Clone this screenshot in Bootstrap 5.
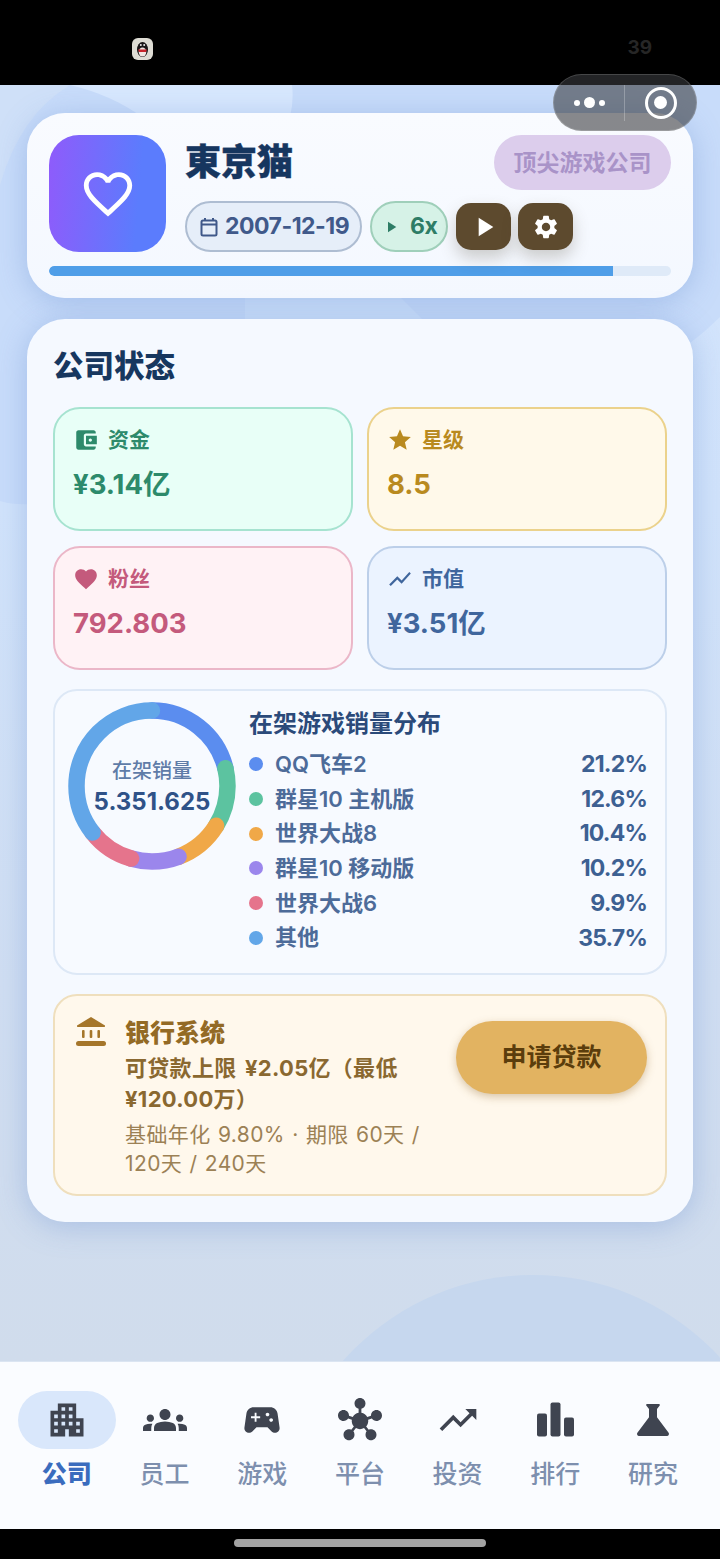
<!DOCTYPE html>
<html lang="zh-CN">
<head>
  <meta charset="UTF-8">
  <title>東京猫 | 公司状态</title>
  <meta name="viewport" content="width=device-width, initial-scale=1">
  <link href="https://cdn.jsdelivr.net/npm/bootstrap@5.3.0/dist/css/bootstrap.min.css" rel="stylesheet" />
  <style>
    body {
      margin: 0;
      background: #000;
      font-family: Inter, "Noto Sans CJK SC", sans-serif;
    }
    svg { display: block; fill: currentColor; flex-shrink: 0; }
    .phone { width: 720px; height: 1559px; position: relative; overflow: hidden; }

    /* status bar */
    .status-bar { height: 85px; background: #000; padding: 38px 68px 0 132px; }
    .status-num { color: #262626; font-size: 19px; font-weight: 700; line-height: 20px; }
    .capsule {
      position: absolute; left: 553px; top: 74px; width: 144px; height: 57px;
      border-radius: 29px; background: rgba(58, 60, 64, .6); border: 1px solid rgba(255,255,255,.16);
      color: #fff; z-index: 5;
    }
    .capsule-side { width: 70px; }
    .capsule-line { width: 1px; height: 36px; background: rgba(255,255,255,.25); }
    .cap-dot { width: 6px; height: 6px; border-radius: 50%; background: #fff; }
    .cap-dot.big { width: 11px; height: 11px; }
    .cap-ring { width: 32px; height: 32px; border-radius: 50%; border: 3px solid #fff; }
    .cap-ring span { width: 13px; height: 13px; border-radius: 50%; background: #fff; }

    /* page */
    .page-area {
      height: 1276px; position: relative; overflow: hidden; padding: 28px 27px 0;
      background: linear-gradient(180deg, #d4e5fd 0, #d1e3fb 420px, #d0def2 900px, #d0dcec 1276px);
    }
    .bg-shapes { position: absolute; left: 0; top: 0; }
    .bg-arc {
      position: absolute; left: 280px; top: 1190px; width: 506px; height: 506px;
      border-radius: 50%; background: #c6d7ee;
    }
    .glass {
      position: relative; background: #f5f9ff; border-radius: 38px;
      box-shadow: 0 4px 30px rgba(96, 136, 205, .36);
    }
    .head-card { height: 185px; padding: 22px; margin-bottom: 21px; background: linear-gradient(180deg,#f9fbff,#f4f8ff); }
    .logo-box {
      width: 117px; height: 117px; border-radius: 30px; color: #fff;
      background: linear-gradient(95deg, #8f5bfb, #5b7cfd 75%);
    }
    .head-main { margin-left: 20px; }
    .head-title { font-size: 36px; font-weight: 800; color: #16365f; line-height: 55px; height: 55px; margin-left: -1px; -webkit-text-stroke: .4px #16365f; }
    .level-tag {
      width: 177px; height: 55px; border-radius: 28px; background: #dccdec; padding-top: 2px;
      color: #a993c8; font-size: 23px; font-weight: 700;
    }
    .chip-row { margin-top: 11px; margin-left: -1px; gap: 8px; }
    .chip {
      height: 51px; border-radius: 26px; border: 2px solid #aebdd2; background: #e6eef9;
      color: #40598a; font-size: 23px; font-weight: 700; letter-spacing: -.5px;
    }
    .chip-date { width: 177px; padding-left: 12px; gap: 6px; }
    .chip-speed { width: 78px; background: #d6f2e7; border-color: #9fcfba; color: #2e7d66; padding-left: 10px; gap: 10px; }
    .brown-btn {
      width: 55px; height: 47px; border-radius: 15px; border: 0; padding: 0; color: #fff;
      background: #5d4a2e; box-shadow: 0 8px 16px rgba(80, 70, 50, .25);
    }
    .brown-btn + .brown-btn { margin-left: -1px; }
    .bar-track { height: 10px; margin-top: 14px; background: #dfeaf8; border-radius: 5px; overflow: hidden; }
    .bar-fill { height: 100%; background: #4f9ee8; border-radius: 5px 0 0 5px; }

    .status-card { height: 903px; padding: 0 26px; }
    .sec-title { font-size: 30.5px; font-weight: 800; color: #17375f; line-height: 40px; padding-top: 27px; height: 88px; }
    .stat-grid { display: grid; grid-template-columns: 300px 300px; gap: 15px 14px; }
    .stat-box { height: 124px; border-radius: 27px; border: 2px solid; padding: 17px 18px; }
    .stat-label { font-size: 21px; font-weight: 700; line-height: 28px; gap: 9px; }
    .stat-value { font-size: 27.5px; font-weight: 700; line-height: 40px; margin-top: 10px; }
    .tone-green { background: #e8fff7; border-color: #a6e3d0; color: #2d8a6b; }
    .tone-yellow { background: #fff9ea; border-color: #ebd28c; color: #b98a1f; }
    .tone-pink { background: #fff2f5; border-color: #ebb7c8; color: #c45a7c; }
    .tone-blue { background: #ebf3ff; border-color: #bccfe9; color: #40669d; }

    .dist-panel {
      height: 286px; margin-top: 19px; padding: 11px 18px 0 13px; gap: 13px;
      background: #f7faff; border: 2px solid #dde8f6; border-radius: 24px;
    }
    .donut { width: 168px; height: 168px; position: relative; }
    .donut-text { position: absolute; inset: 0; padding-top: 53px; text-align: center; }
    .donut-cap { font-size: 20px; font-weight: 500; color: #5f7ca8; line-height: 32px; }
    .donut-num { font-size: 24px; font-weight: 700; color: #2f5288; line-height: 30px; }
    .dist-title { font-size: 24px; font-weight: 700; color: #2b4a7a; line-height: 36px; padding-top: 4px; margin-bottom: 3px; height: 42px; }
    .dist-row { height: 34.7px; color: #4d6b99; font-size: 22px; font-weight: 600; }
    .dist-dot { width: 14px; height: 14px; border-radius: 50%; margin-right: 12px; }
    .dist-pct { font-size: 23px; font-weight: 700; color: #3d6092; letter-spacing: -.8px; }

    .bank-panel {
      height: 202px; margin-top: 19px; padding: 0 18px 0 21px;
      background: #fff8ec; border: 2px solid #efdfbd; border-radius: 24px; color: #8a6830;
    }
    .bank-icon { width: 30px; margin-top: 21px; color: #a5762a; }
    .bank-text { width: 310px; margin-left: 19px; padding-top: 19px; }
    .bank-title { font-size: 25px; font-weight: 800; color: #936a25; line-height: 36px; }
    .bank-line { font-size: 22px; font-weight: 700; line-height: 31px; margin-top: 2px; letter-spacing: .3px; word-spacing: 3px; }
    .bank-sub { font-size: 21px; font-weight: 400; line-height: 29px; color: #9c8155; margin-top: 5px; letter-spacing: .4px; word-spacing: 1px; }
    .bank-btn {
      width: 191px; height: 73px; margin: 25px 0 0 auto; border: 0; border-radius: 37px;
      background: #e2b361; color: #5b3d0c; font-size: 25px; font-weight: 600;
      box-shadow: 0 3px 8px rgba(140, 100, 40, .35);
    }

    /* bottom nav */
    .tab-bar { height: 168px; background: #fafcff; border-top: 1px solid #dbe5f2; padding: 29px 18px 0; }
    .tab-item { width: 97.7px; color: #7d8fae; }
    .tab-icon { width: 98px; height: 58px; border-radius: 29px; color: #3f4450; }
    .tab-item.active .tab-icon { background: #d9e7fb; }
    .tab-label { font-size: 25px; font-weight: 500; line-height: 36px; margin-top: 7px; }
    .tab-item.active { color: #3a6cbe; }
    .tab-item.active .tab-label { font-weight: 800; }
    .home-bar { height: 30px; background: #000; padding-top: 10px; }
    .home-pill { width: 252px; height: 8px; border-radius: 4px; background: #a3a3a3; }
  </style>
</head>

<body>
<div class="phone">

  <!-- STATUS BAR -->
  <div class="status-bar d-flex justify-content-between align-items-start">
    <svg width="21" height="22" viewBox="0 0 21 22">
      <rect width="21" height="22" rx="6" fill="#dedcd4"/>
      <ellipse cx="10.500" cy="11.500" rx="5.500" ry="7.500" fill="#191517"/>
      <ellipse cx="10.500" cy="14" rx="3.800" ry="4.500" fill="#f1e6e2"/>
      <path d="M6 11.500h9l-1 2.500H7z" fill="#c8252c"/>
      <circle cx="8.800" cy="7" r="1" fill="#eee"/>
      <circle cx="12.200" cy="7" r="1" fill="#eee"/>
    </svg>
    <span class="status-num">39</span>
  </div>

  <div class="capsule d-flex align-items-center">
    <div class="capsule-side d-flex justify-content-center align-items-center gap-1">
      <span class="cap-dot"></span><span class="cap-dot big"></span><span class="cap-dot"></span>
    </div>
    <span class="capsule-line"></span>
    <div class="capsule-side flex-grow-1 d-flex justify-content-center align-items-center">
      <div class="cap-ring d-flex justify-content-center align-items-center"><span></span></div>
    </div>
  </div>

  <!-- PAGE -->
  <div class="page-area">
    <svg class="bg-shapes" width="720" height="1276" viewBox="0 0 720 1276">
      <path d="M0 0H720V232Q706 246 690 258L30 419Q14 420 0 416Z" fill="#c8dcfa"/>
      <path d="M0 0H70Q20 30 0 100Z" fill="#cfe0f8"/>
      <path d="M70 0Q112 10 142 32H290Q294 15 292 0Z" fill="#d8e8fe"/>
      <path d="M245 210V236H424Q412 224 398 210Z" fill="#cfe2fc"/>
    </svg>
    <div class="bg-arc"></div>

    <!-- HEADER CARD -->
    <div class="glass head-card">
      <div class="d-flex">
        <div class="logo-box d-flex justify-content-center align-items-center">
          <svg width="58" height="58" viewBox="0 0 24 24"><path d="M16.500 3c-1.740 0-3.410.81-4.500 2.090C10.910 3.810 9.240 3 7.500 3 4.420 3 2 5.420 2 8.500c0 3.780 3.400 6.860 8.550 11.540L12 21.350l1.450-1.320C18.600 15.360 22 12.280 22 8.500 22 5.420 19.580 3 16.500 3zm-4.400 15.550l-.1.100-.1-.1C7.140 14.240 4 11.390 4 8.500 4 6.500 5.500 5 7.500 5c1.540 0 3.040.99 3.570 2.360h1.870C13.460 5.990 14.960 5 16.500 5c2 0 3.500 1.500 3.500 3.500 0 2.890-3.140 5.740-7.900 10.050z"/></svg>
        </div>
        <div class="head-main flex-grow-1">
          <div class="d-flex justify-content-between">
            <div class="head-title">東京猫</div>
            <div class="level-tag d-flex justify-content-center align-items-center">顶尖游戏公司</div>
          </div>
          <div class="chip-row d-flex align-items-center">
            <div class="chip chip-date d-flex align-items-center">
              <svg width="20" height="22" viewBox="0 0 20 22" fill="none" stroke="currentColor" stroke-width="2"><rect x="2.500" y="4.500" width="15" height="15" rx="1.500" style="fill:none"/><path d="M2.500 8.500h15M6 2v3M14 2v3" style="fill:none"/></svg>
              <span>2007-12-19</span>
            </div>
            <div class="chip chip-speed d-flex align-items-center">
              <svg width="18" height="18" viewBox="0 0 24 24"><path d="M8 5v14l11-7z"/></svg>
              <span>6x</span>
            </div>
            <button class="brown-btn d-flex justify-content-center align-items-center">
              <svg width="32" height="32" viewBox="0 0 24 24"><path d="M8 5v14l11-7z"/></svg>
            </button>
            <button class="brown-btn d-flex justify-content-center align-items-center">
              <svg width="28" height="28" viewBox="0 0 24 24"><path d="M19.140 12.940c.04-.3.06-.61.06-.94 0-.32-.02-.64-.07-.94l2.030-1.580c.18-.14.23-.41.12-.61l-1.920-3.320c-.12-.22-.37-.29-.59-.22l-2.390.96c-.5-.38-1.030-.7-1.620-.94l-.36-2.540c-.04-.24-.24-.41-.48-.41h-3.840c-.24 0-.43.17-.47.41l-.36 2.540c-.59.24-1.130.57-1.620.94l-2.390-.96c-.22-.08-.47 0-.59.22L2.740 8.870c-.12.21-.08.47.12.61l2.030 1.580c-.05.3-.09.63-.09.94s.02.64.07.94l-2.030 1.580c-.18.14-.23.41-.12.61l1.920 3.320c.12.22.37.29.59.22l2.390-.96c.5.38 1.030.7 1.620.94l.36 2.540c.05.24.24.41.48.41h3.840c.24 0 .44-.17.47-.41l.36-2.540c.59-.24 1.130-.56 1.620-.94l2.390.96c.22.08.47 0 .59-.22l1.920-3.320c.12-.22.07-.47-.12-.61l-2.010-1.580zM12 15.600c-1.980 0-3.600-1.620-3.600-3.600s1.620-3.600 3.600-3.600 3.600 1.620 3.600 3.600-1.620 3.600-3.600 3.600z"/></svg>
            </button>
          </div>
        </div>
      </div>
      <div class="bar-track"><div class="bar-fill" style="width: 90.7%"></div></div>
    </div>

    <!-- COMPANY STATUS -->
    <div class="glass status-card">
      <div class="sec-title">公司状态</div>

      <div class="stat-grid">
        <div class="stat-box tone-green">
          <div class="stat-label d-flex align-items-center">
            <svg width="26" height="26" viewBox="0 0 24 24"><path d="M21 18v1c0 1.100-.9 2-2 2H5c-1.110 0-2-.9-2-2V5c0-1.100.89-2 2-2h14c1.100 0 2 .9 2 2v1h-9c-1.110 0-2 .9-2 2v8c0 1.100.89 2 2 2h9zm-9-2h10V8H12v8zm4-2.500c-.83 0-1.500-.67-1.500-1.500s.67-1.500 1.500-1.500 1.500.67 1.500 1.500-.67 1.500-1.500 1.500z"/></svg>
            <span>资金</span>
          </div>
          <div class="stat-value">¥3.14亿</div>
        </div>
        <div class="stat-box tone-yellow">
          <div class="stat-label d-flex align-items-center">
            <svg width="26" height="26" viewBox="0 0 24 24"><path d="M12 17.270L18.180 21l-1.640-7.030L22 9.240l-7.190-.61L12 2 9.190 8.630 2 9.240l5.460 4.730L5.820 21z"/></svg>
            <span>星级</span>
          </div>
          <div class="stat-value">8.5</div>
        </div>
        <div class="stat-box tone-pink">
          <div class="stat-label d-flex align-items-center">
            <svg width="26" height="26" viewBox="0 0 24 24"><path d="M12 21.350l-1.450-1.320C5.400 15.360 2 12.280 2 8.500 2 5.420 4.420 3 7.500 3c1.740 0 3.410.81 4.500 2.090C13.090 3.810 14.760 3 16.500 3 19.580 3 22 5.420 22 8.500c0 3.780-3.400 6.860-8.550 11.540L12 21.350z"/></svg>
            <span>粉丝</span>
          </div>
          <div class="stat-value">792.803</div>
        </div>
        <div class="stat-box tone-blue">
          <div class="stat-label d-flex align-items-center">
            <svg width="26" height="26" viewBox="0 0 24 24"><path d="M3.500 18.490l6-6.010 4 4L22 6.920l-1.410-1.410-7.090 7.970-4-4L2 16.990z"/></svg>
            <span>市值</span>
          </div>
          <div class="stat-value">¥3.51亿</div>
        </div>
      </div>

      <!-- SALES DISTRIBUTION -->
      <div class="dist-panel d-flex">
        <div class="donut" id="donut">
          <div class="donut-text">
            <div class="donut-cap">在架销量</div>
            <div class="donut-num">5.351.625</div>
          </div>
        </div>
        <div class="flex-grow-1">
          <div class="dist-title">在架游戏销量分布</div>
          <div id="dist-rows"></div>
        </div>
      </div>

      <!-- BANK -->
      <div class="bank-panel d-flex">
        <svg class="bank-icon" height="30" viewBox="0 0 30 30">
          <path d="M15 0L29 8.500Q29.500 10 28 10H2Q.5 10 1 8.500Z"/>
          <rect x="6" y="13" width="2.600" height="8" rx="1"/>
          <rect x="13.700" y="13" width="2.600" height="8" rx="1"/>
          <rect x="21.400" y="13" width="2.600" height="8" rx="1"/>
          <rect x="0" y="24" width="30" height="5" rx="2.500"/>
        </svg>
        <div class="bank-text">
          <div class="bank-title">银行系统</div>
          <div class="bank-line">可贷款上限 ¥2.05亿（最低 ¥120.00万）</div>
          <div class="bank-sub">基础年化 9.80% · 期限 60天 / 120天 / 240天</div>
        </div>
        <button class="bank-btn">申请贷款</button>
      </div>
    </div>
  </div>

  <!-- BOTTOM NAV -->
  <div class="tab-bar d-flex">
    <div class="tab-item active text-center">
      <div class="tab-icon d-flex justify-content-center align-items-center">
        <svg width="44" height="44" viewBox="0 0 24 24"><path d="M17 11V3H7v4H3v14h8v-4h2v4h8V11h-4zM7 19H5v-2h2v2zm0-4H5v-2h2v2zm0-4H5V9h2v2zm4 4H9v-2h2v2zm0-4H9V9h2v2zm0-4H9V5h2v2zm4 8h-2v-2h2v2zm0-4h-2V9h2v2zm0-4h-2V5h2v2zm4 12h-2v-2h2v2zm0-4h-2v-2h2v2z"/></svg>
      </div>
      <div class="tab-label">公司</div>
    </div>
    <div class="tab-item text-center">
      <div class="tab-icon d-flex justify-content-center align-items-center">
        <svg width="44" height="44" viewBox="0 0 24 24"><path d="M12 12.750c1.630 0 3.070.39 4.240.9 1.080.48 1.760 1.560 1.760 2.730V18H6v-1.610c0-1.180.68-2.260 1.760-2.730 1.170-.52 2.610-.91 4.240-.91zM4 13c1.100 0 2-.9 2-2s-.9-2-2-2-2 .9-2 2 .9 2 2 2zm1.130 1.100C4.760 14.040 4.390 14 4 14c-.99 0-1.930.21-2.780.58C.48 14.900 0 15.620 0 16.430V18h4.500v-1.610c0-.83.23-1.610.63-2.290zM20 13c1.100 0 2-.9 2-2s-.9-2-2-2-2 .9-2 2 .9 2 2 2zm4 3.430c0-.81-.48-1.530-1.220-1.850-.85-.37-1.790-.58-2.780-.58-.39 0-.76.04-1.130.1.4.68.63 1.460.63 2.290V18H24v-1.570zM12 6c1.660 0 3 1.340 3 3s-1.340 3-3 3-3-1.340-3-3 1.340-3 3-3z"/></svg>
      </div>
      <div class="tab-label">员工</div>
    </div>
    <div class="tab-item text-center">
      <div class="tab-icon d-flex justify-content-center align-items-center">
        <svg width="44" height="44" viewBox="0 0 24 24"><path d="M21.580 16.090l-1.090-7.660C20.210 6.460 18.520 5 16.530 5H7.470C5.480 5 3.790 6.460 3.510 8.430l-1.090 7.660C2.200 17.630 3.390 19 4.940 19c.68 0 1.320-.27 1.800-.75L9 16h6l2.250 2.250c.48.48 1.130.75 1.800.75 1.560 0 2.750-1.370 2.530-2.910zM11 11H9v2H8v-2H6v-1h2V8h1v2h2v1zm4-1c-.55 0-1-.45-1-1s.45-1 1-1 1 .45 1 1-.45 1-1 1zm2 3c-.55 0-1-.45-1-1s.45-1 1-1 1 .45 1 1-.45 1-1 1z"/></svg>
      </div>
      <div class="tab-label">游戏</div>
    </div>
    <div class="tab-item text-center">
      <div class="tab-icon d-flex justify-content-center align-items-center">
        <svg width="44" height="44" viewBox="0 0 24 24"><path d="M8.400 18.200c.38.5.6 1.120.6 1.800 0 1.660-1.340 3-3 3s-3-1.340-3-3 1.340-3 3-3c.44 0 .85.09 1.230.26l1.410-1.770c-.92-1.030-1.290-2.390-1.090-3.690l-2.030-.68c-.54.83-1.460 1.380-2.520 1.380-1.660 0-3-1.340-3-3s1.340-3 3-3 3 1.340 3 3c0 .07 0 .14-.01.21l2.030.68c.64-1.210 1.820-2.090 3.220-2.320V5.910C9.960 5.570 9 4.400 9 3c0-1.660 1.340-3 3-3s3 1.340 3 3c0 1.400-.96 2.570-2.250 2.910v2.160c1.400.23 2.580 1.110 3.220 2.320l2.030-.68C18 9.640 18 9.570 18 9.500c0-1.660 1.340-3 3-3s3 1.340 3 3-1.340 3-3 3c-1.060 0-1.980-.55-2.520-1.380l-2.030.68c.2 1.290-.16 2.650-1.090 3.690l1.410 1.770C17.150 17.090 17.560 17 18 17c1.660 0 3 1.340 3 3s-1.340 3-3 3-3-1.340-3-3c0-.68.22-1.300.6-1.800l-1.410-1.770c-1.350.75-3.010.76-4.380 0L8.400 18.200z"/></svg>
      </div>
      <div class="tab-label">平台</div>
    </div>
    <div class="tab-item text-center">
      <div class="tab-icon d-flex justify-content-center align-items-center">
        <svg width="44" height="44" viewBox="0 0 24 24"><path d="M16 6l2.290 2.290-4.880 4.880-4-4L2 16.590 3.410 18l6-6 4 4 6.300-6.290L22 12V6z"/></svg>
      </div>
      <div class="tab-label">投资</div>
    </div>
    <div class="tab-item text-center">
      <div class="tab-icon d-flex justify-content-center align-items-center">
        <svg width="40" height="40" viewBox="-1 -2.500 40 40"><rect x="1" y="11" width="10" height="23" rx="2"/><rect x="14.500" y="0" width="10" height="34" rx="2"/><rect x="28" y="15" width="10" height="19" rx="2"/></svg>
      </div>
      <div class="tab-label">排行</div>
    </div>
    <div class="tab-item text-center">
      <div class="tab-icon d-flex justify-content-center align-items-center">
        <svg width="48" height="48" viewBox="0 0 24 24"><path d="M19.800 18.400L14 10.670V6.500l1.350-1.690c.26-.33.03-.81-.39-.81H9.040c-.42 0-.65.48-.39.81L10 6.500v4.170L4.200 18.400c-.49.66-.02 1.600.8 1.600h14c.82 0 1.290-.94.8-1.600z"/></svg>
      </div>
      <div class="tab-label">研究</div>
    </div>
  </div>

  <div class="home-bar d-flex justify-content-center"><div class="home-pill"></div></div>
</div>

<script src="https://cdn.jsdelivr.net/npm/bootstrap@5.3.0/dist/js/bootstrap.bundle.min.js"></script>

<script>
  const games = [
    { name: "QQ飞车2", pct: 21.2, color: "#5b8def" },
    { name: "群星10 主机版", pct: 12.6, color: "#5cc3a0" },
    { name: "世界大战8", pct: 10.4, color: "#f0a848" },
    { name: "群星10 移动版", pct: 10.2, color: "#9b86ec" },
    { name: "世界大战6", pct: 9.9, color: "#e5748c" },
    { name: "其他", pct: 35.7, color: "#62a6e8" }
  ];

  const rowsEl = document.getElementById("dist-rows");
  games.forEach((g) => {
    const row = document.createElement("div");
    row.className = "dist-row d-flex align-items-center";
    row.innerHTML = `
      <span class="dist-dot" style="background:${g.color}"></span>
      <span class="flex-grow-1">${g.name}</span>
      <span class="dist-pct">${g.pct}%</span>`;
    rowsEl.appendChild(row);
  });

  // donut segments, drawn in order so each round cap sits on the previous one
  const r = 75.5;
  const full = 2 * Math.PI * r;
  let start = 0;
  let arcs = "";
  games.forEach((g) => {
    const len = full * g.pct / 100;
    arcs += `<circle cx="84" cy="84" r="${r}" fill="none" stroke="${g.color}" stroke-width="16.500" stroke-linecap="round"
      stroke-dasharray="${len} ${full - len}" stroke-dashoffset="${-start}" transform="rotate(-90 84 84)"/>`;
    start += len;
  });
  document.getElementById("donut").insertAdjacentHTML("afterbegin",
    `<svg width="168" height="168" viewBox="0 0 168 168">${arcs}</svg>`);
</script>
</body>
</html>
